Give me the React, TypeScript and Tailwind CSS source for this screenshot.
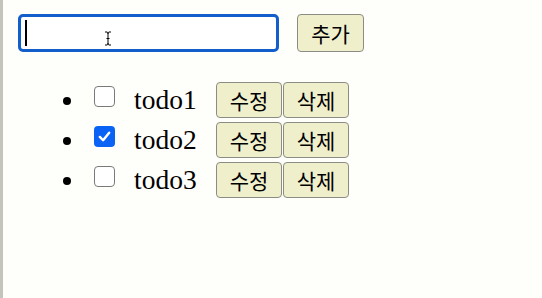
import React from "react";

const todos = [
  { id: 1, text: "todo1", done: false },
  { id: 2, text: "todo2", done: true },
  { id: 3, text: "todo3", done: false },
];

function Btn({ children }: { children: React.ReactNode }) {
  return (
    <button className="h-[36px] w-[66px] rounded-[4px] border border-[#8c8c84] bg-[#efefcc] text-[21px] leading-none text-black [font-family:'Noto_Sans_CJK_KR','Noto_Sans',sans-serif]">
      {children}
    </button>
  );
}

function Check({ checked }: { checked: boolean }) {
  return checked ? (
    <span className="flex h-[21px] w-[21px] items-center justify-center rounded-[4px] bg-[#0b63f6]">
      <svg width="15" height="15" viewBox="0 0 16 16">
        <path d="M3 8.5 L6.5 12 L13 4" fill="none" stroke="white" strokeWidth="2.6" strokeLinecap="round" strokeLinejoin="round" />
      </svg>
    </span>
  ) : (
    <span className="block h-[21px] w-[21px] rounded-[4px] border-[1.5px] border-[#7a7a7a] bg-white" />
  );
}

export default function App() {
  return (
    <div className="min-h-[298px] w-[542px] border-l-[3px] border-[#c4c4bc] bg-[#fefefa]">
      <div className="flex items-center gap-[18px] pl-[15px] pt-[14px]">
        <div className="relative h-[38px] w-[261px] rounded-[5px] border-[3px] border-[#125fcb] bg-white">
          <span className="absolute left-[4px] top-[3px] h-[26px] w-[2px] bg-black" />
          <svg className="absolute left-[83px] top-[14px]" width="8" height="15" viewBox="0 0 8 15">
            <path d="M1 1 H3 Q4 1 4 3 V12 Q4 14 3 14 H1 M7 1 H5 Q4 1 4 3 M4 12 Q4 14 5 14 H7 M2.5 7.5 H5.5" fill="none" stroke="black" strokeWidth="1" />
          </svg>
        </div>
        <button className="h-[38px] w-[67px] rounded-[4px] border border-[#8c8c84] bg-[#efefcc] text-[21px] leading-none text-black [font-family:'Noto_Sans_CJK_KR','Noto_Sans',sans-serif]">
          추가
        </button>
      </div>
      <ul className="mt-[28px] flex flex-col pl-[60px]">
        {todos.map((t) => (
          <li key={t.id} className="flex h-[40px] items-center">
            <span className="mt-[1px] h-[8px] w-[8px] rounded-full bg-black" />
            <span className="ml-[23px] -mt-[7px]">
              <Check checked={t.done} />
            </span>
            <span className="ml-[19px] w-[62px] text-[27.5px] leading-none text-black [font-family:'Liberation_Serif','Times_New_Roman',serif]">
              {t.text}
            </span>
            <span className="ml-[20px] flex">
              <Btn>수정</Btn>
              <span className="ml-[1px]" />
              <Btn>삭제</Btn>
            </span>
          </li>
        ))}
      </ul>
    </div>
  );
}
